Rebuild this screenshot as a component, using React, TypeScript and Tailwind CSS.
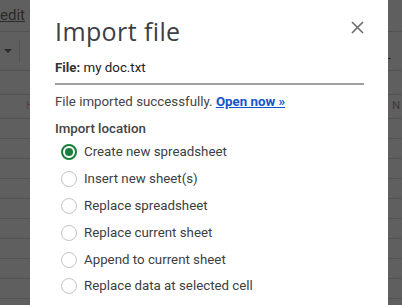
import React from "react";

const options = [
  "Create new spreadsheet",
  "Insert new sheet(s)",
  "Replace spreadsheet",
  "Replace current sheet",
  "Append to current sheet",
  "Replace data at selected cell",
];

function Radio({ checked }: { checked: boolean }) {
  return checked ? (
    <span className="w-[16px] h-[16px] rounded-full border-2 border-[#188038] flex items-center justify-center shrink-0">
      <span className="w-[8px] h-[8px] rounded-full bg-[#188038]" />
    </span>
  ) : (
    <span className="w-[16px] h-[16px] rounded-full border border-[#c4c4c4] shrink-0" />
  );
}

export default function App() {
  const rows = Array.from({ length: 9 }, (_, i) => i);
  return (
    <div
      className="relative w-[402px] h-[305px] overflow-hidden bg-[#5f5f5f]"
      style={{ fontFamily: "Roboto, 'Liberation Sans', sans-serif" }}
    >
      {/* background spreadsheet (dimmed by overlay) */}
      <div className="flex flex-col w-full">
        <div className="h-[32px] border-b border-[#525252] pt-[3px]">
          <span className="text-[15px] leading-[20px] text-[#2a2a2a] underline">edit</span>
        </div>
        <div className="h-[39px] border-b border-[#525252] flex items-center justify-between">
          <div className="flex items-center h-[22px]">
            <span className="ml-[4px] w-0 h-0 border-l-[4px] border-r-[4px] border-t-[4px] border-l-transparent border-r-transparent border-t-[#2a2a2a]" />
            <span className="ml-[7px] w-px h-[22px] bg-[#525252]" />
          </div>
          <div className="mr-[11px] flex flex-col items-center">
            <span className="w-px h-[14px] bg-[#2a2a2a]" />
            <span className="w-[10px] h-px bg-[#2a2a2a]" />
          </div>
        </div>
        <div className="h-[24px] border-b border-[#525252]" />
        <div className="h-[24px] border-b border-[#525252] flex items-center justify-between text-[11px]">
          <span className="ml-[26px] text-[#5a3a45]">H</span>
          <span className="mr-[2px] text-[#3a3a3a]">N</span>
        </div>
        {rows.map((r) => (
          <div key={r} className="h-[20px] border-b border-[#535353]" />
        ))}
      </div>

      {/* dialog overlay */}
      <div className="absolute left-[30px] top-0 w-[358px] h-[320px] bg-white px-[25px]">
        <div className="flex items-start justify-between pt-[15px]">
          <div
            className="text-[25px] leading-[32px] font-normal tracking-[0.4px] text-[#3c4043]"
            style={{ fontFamily: "'Open Sans', Roboto, sans-serif" }}
          >
            Import file
          </div>
          <button className="mt-[6px] mr-[-1px]">
            <svg width="13" height="13" viewBox="0 0 13 13">
              <path d="M1 1 L12 12 M12 1 L1 12" stroke="#6b6b6b" strokeWidth="1.6" />
            </svg>
          </button>
        </div>
        <div className="mt-[11px] text-[13.3px] leading-[20px] text-[#222] pb-[5px] border-b-2 border-[#a0a0a0] w-[309px]">
          <span className="font-bold text-[#333]">File:</span> my doc.txt
        </div>
        <div className="mt-[7px] text-[13.3px] leading-[20px] text-[#444]">
          File imported successfully.{" "}
          <a className="font-bold text-[#1155cc] underline">Open now »</a>
        </div>
        <div className="mt-[7px] text-[13.3px] leading-[20px] font-medium text-[#444]">Import location</div>
        <div className="flex flex-col pl-[6px]">
          {options.map((o, i) => (
            <div key={o} className="flex items-center gap-[7px] h-[26.8px] text-[13.3px] text-[#3c4043]">
              <Radio checked={i === 0} />
              <span>{o}</span>
            </div>
          ))}
        </div>
      </div>
    </div>
  );
}
